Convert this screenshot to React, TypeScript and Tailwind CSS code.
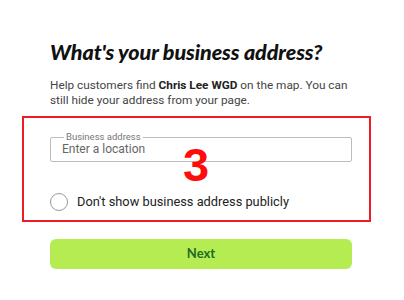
import { useState } from "react";

export default function App() {
  const [hidden, setHidden] = useState(false);

  return (
    <div className="w-[404px] h-[300px] bg-white overflow-hidden font-['Roboto',sans-serif]">
      <div className="pl-[50px] pt-[37px] w-[352px]">
        <h1 className="font-['Lato',sans-serif] font-black italic text-[21.5px] leading-[30px] text-[#111] tracking-[-0.1px]">
          What's your business address?
        </h1>
        <p className="mt-[11px] text-[11.8px] leading-[15px] text-[#444]">
          Help customers find <span className="font-bold text-[#222]">Chris Lee WGD</span> on the map. You can still hide your address from your page.
        </p>

        <div className="relative mt-[24px]">
          {/* annotation box */}
          <div className="absolute left-[-28px] right-[-19px] top-[-16px] bottom-[-11px] border-2 border-[#ee1c24] pointer-events-none" />
          <span className="absolute left-[133px] top-[9px] font-['Liberation_Sans',sans-serif] font-bold text-[47px] leading-none text-[#ff0d0d]">
            3
          </span>

          <fieldset className="border border-[#bdbdbd] rounded-[2px] h-[30px] px-[12px]">
            <legend className="text-[9.5px] leading-[10px] text-[#777] px-[2px] ml-[1px]">Business address</legend>
            <div className="text-[12px] leading-[14px] text-[#666] -ml-[1px]">Enter a location</div>
          </fieldset>

          <label className="flex items-center gap-[9px] mt-[31px] cursor-pointer" onClick={() => setHidden(!hidden)}>
            <span className="w-[18px] h-[18px] rounded-full border border-[#9a9a9a] flex items-center justify-center bg-white">
              {hidden && <span className="w-[10px] h-[10px] rounded-full bg-[#333]" />}
            </span>
            <span className="text-[12.8px] leading-[18px] text-[#222]">Don't show business address publicly</span>
          </label>
        </div>

        <button className="mt-[28px] w-[302px] h-[30px] rounded-[6px] bg-[#b4ec51] font-['Lato',sans-serif] font-bold text-[13px] text-[#1d6a28]">
          Next
        </button>
      </div>
    </div>
  );
}
